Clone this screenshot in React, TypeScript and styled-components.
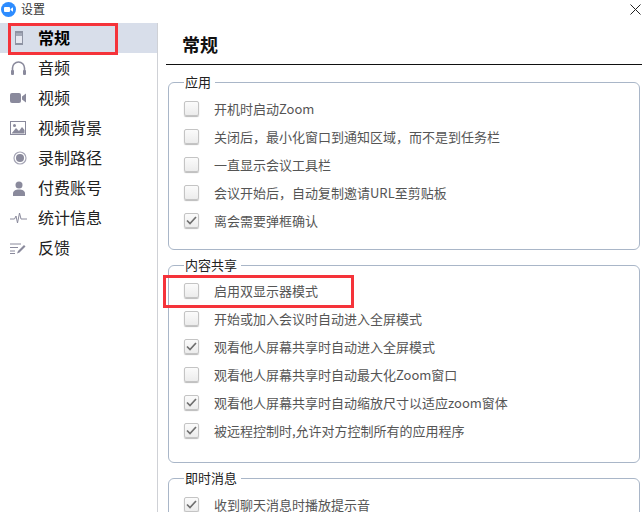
import React from 'react';
import styled, { createGlobalStyle } from 'styled-components';

const Global = createGlobalStyle`
  html, body { margin: 0; padding: 0; background: #fff; overflow: hidden; }
  body { font-family: "Noto Sans CJK SC", "Liberation Sans", sans-serif; }
  * { box-sizing: border-box; }
`;

const Win = styled.div`
  position: relative;
  width: 642px;
  height: 512px;
  overflow: hidden;
  background: #fff;
`;
const TitleBar = styled.div`
  height: 23px;
  display: flex;
  align-items: center;
  padding: 0 0 5px 1px;
  gap: 5px;
  font-size: 12px;
  color: #333;
`;
const TitleText = styled.span`
  line-height: 18px;
`;
const CloseBtn = styled.svg`
  margin-left: auto;
  margin-right: 1px;
  flex: none;
`;
const Body = styled.div`
  display: flex;
  height: 489px;
`;
const Sidebar = styled.nav`
  width: 158px;
  flex: none;
  border-right: 1px solid #cfd1d6;
`;
const NavRow = styled.div<{ $active?: boolean }>`
  height: 30px;
  display: flex;
  align-items: center;
  background: ${p => (p.$active ? '#d8deea' : 'transparent')};
  color: ${p => (p.$active ? '#000' : '#222')};
  font-size: 16px;
  font-weight: ${p => (p.$active ? 700 : 400)};
`;
const NavLabel = styled.span`
  line-height: 26px;
  margin-bottom: 3px;
`;
const NavIcon = styled.span`
  width: 38px;
  padding-left: 10px;
  flex: none;
  display: flex;
  align-items: center;
`;
const Main = styled.main`
  flex: 1;
  min-width: 0;
  padding-left: 8px;
`;
const Heading = styled.h1`
  margin: 0;
  height: 42px;
  padding: 8px 0 0 16px;
  font-size: 18px;
  line-height: 26px;
  font-weight: 700;
  color: #111;
  border-bottom: 1px solid #111;
`;
const Groups = styled.div`
  padding: 8px 2px 0 2px;
  display: flex;
  flex-direction: column;
  gap: 6px;
`;
const Group = styled.fieldset<{ $h: number }>`
  margin: 0;
  padding: 0 0 0 15px;
  min-width: 0;
  height: ${p => p.$h}px;
  border: 1px solid #a9b6c8;
  border-radius: 6px;
  display: block;
`;
const Legend = styled.legend`
  margin-left: 0;
  padding: 0 4px 0 1px;
  font-size: 13px;
  line-height: 18px;
  color: #222;
`;
const Rows = styled.div<{ $top: number }>`
  padding-top: ${p => p.$top}px;
`;
const Row = styled.div`
  height: 28px;
  display: flex;
  align-items: center;
  gap: 15px;
  font-size: 13px;
  color: #555;
  white-space: nowrap;
`;
const Box = styled.span`
  width: 15px;
  height: 15px;
  flex: none;
  border: 1px solid #c4c4c4;
  border-radius: 2px;
  background: linear-gradient(#fbfbfb, #ececec);
  box-shadow: 0 1px 1px #bbb;
  display: flex;
  align-items: center;
  justify-content: center;
`;
const Highlight = styled.div<{ $x: number; $y: number; $w: number; $h: number }>`
  position: absolute;
  left: ${p => p.$x}px;
  top: ${p => p.$y}px;
  width: ${p => p.$w}px;
  height: ${p => p.$h}px;
  border: 3px solid #f5333a;
  pointer-events: none;
`;

const c = '#8a8a9c';
const navIcons: Record<string, React.ReactNode> = {
  general: (
    <svg width="14" height="16" viewBox="0 0 14 16">
      <rect x="5" y="1" width="8" height="14" fill="#8e93a3" />
      <rect x="6" y="3" width="6" height="3" fill="#a4a9b8" />
      <rect x="6" y="6" width="6" height="7" fill="#e6e8f0" />
    </svg>
  ),
  audio: (
    <svg width="17" height="16" viewBox="0 0 17 16">
      <path d="M2.5 11V8a6 6 0 0 1 12 0v3" fill="none" stroke={c} strokeWidth="1.6" />
      <rect x="1" y="10" width="3" height="5" rx="1" fill={c} />
      <rect x="13" y="10" width="3" height="5" rx="1" fill={c} />
    </svg>
  ),
  video: (
    <svg width="17" height="12" viewBox="0 0 17 12">
      <rect x="0" y="1" width="11" height="10" rx="2" fill={c} />
      <path d="M12 4.5 16 1.5v9l-4-3z" fill={c} />
    </svg>
  ),
  bg: (
    <svg width="16" height="14" viewBox="0 0 16 14">
      <rect x=".5" y=".5" width="15" height="13" fill="#fff" stroke={c} />
      <circle cx="4.5" cy="4.5" r="1.5" fill={c} />
      <path d="M1.5 12.5 6 7l3 3 3-4 2.5 3v3.500z" fill={c} />
    </svg>
  ),
  record: (
    <svg width="14" height="14" viewBox="0 0 14 14" style={{ marginLeft: 3 }}>
      <circle cx="7" cy="7" r="6" fill="none" stroke="#a5a5b5" strokeWidth="1.200" />
      <circle cx="7" cy="7" r="4" fill={c} />
    </svg>
  ),
  account: (
    <svg width="14" height="15" viewBox="0 0 14 15" style={{ marginLeft: 2 }}>
      <circle cx="7" cy="4" r="3.500" fill={c} />
      <path d="M1 15v-2.500C1 10 3.500 8.500 7 8.500s6 1.500 6 4V15z" fill={c} />
    </svg>
  ),
  stats: (
    <svg width="17" height="12" viewBox="0 0 17 12">
      <path d="M0 7h4.500l1.500-3 1.500 7 2-10 1.500 6h6" fill="none" stroke={c} strokeWidth="1" />
    </svg>
  ),
  feedback: (
    <svg width="16" height="11" viewBox="0 0 16 11">
      <path d="M0 1h11M0 4.500h8M0 8h5M0 10.500h5" fill="none" stroke={c} strokeWidth="1" />
      <path d="M7 10.500 8 8l6-6 1.500 1.500-6 6z" fill={c} />
    </svg>
  ),
};

const nav = [
  ['general', '常规'],
  ['audio', '音频'],
  ['video', '视频'],
  ['bg', '视频背景'],
  ['record', '录制路径'],
  ['account', '付费账号'],
  ['stats', '统计信息'],
  ['feedback', '反馈'],
];

type Item = [string, boolean];
const groups: { title: string; h: number; top: number; items: Item[] }[] = [
  {
    title: '应用',
    h: 177,
    top: 3,
    items: [
      ['开机时启动Zoom', false],
      ['关闭后，最小化窗口到通知区域，而不是到任务栏', false],
      ['一直显示会议工具栏', false],
      ['会议开始后，自动复制邀请URL至剪贴板', false],
      ['离会需要弹框确认', true],
    ],
  },
  {
    title: '内容共享',
    h: 207,
    top: 2,
    items: [
      ['启用双显示器模式', false],
      ['开始或加入会议时自动进入全屏模式', false],
      ['观看他人屏幕共享时自动进入全屏模式', true],
      ['观看他人屏幕共享时自动最大化Zoom窗口', false],
      ['观看他人屏幕共享时自动缩放尺寸以适应zoom窗体', true],
      ['被远程控制时,允许对方控制所有的应用程序', true],
    ],
  },
  {
    title: '即时消息',
    h: 80,
    top: 3,
    items: [['收到聊天消息时播放提示音', true]],
  },
];

const Check = () => (
  <svg width="11" height="9" viewBox="0 0 11 9">
    <path d="M1 4.500 4 7.500 10 1" fill="none" stroke="#6f6f6f" strokeWidth="1.700" />
  </svg>
);

export default function App() {
  return (
    <Win>
      <Global />
      <TitleBar>
        <svg width="15" height="15" viewBox="0 0 15 15">
          <circle cx="7.500" cy="7.500" r="7.500" fill="#2d8cff" />
          <rect x="3" y="5" width="6" height="5" rx="1" fill="#fff" />
          <path d="M9.500 7 12 5.200v4.600L9.500 8z" fill="#fff" />
        </svg>
        <TitleText>设置</TitleText>
        <CloseBtn width="11" height="11" viewBox="0 0 11 11">
          <path d="M.5.500l10 10M10.500.500l-10 10" stroke="#222" strokeWidth="1" fill="none" />
        </CloseBtn>
      </TitleBar>
      <Body>
        <Sidebar>
          {nav.map(([k, label], i) => (
            <NavRow key={k} $active={i === 0}>
              <NavIcon>{navIcons[k]}</NavIcon>
              <NavLabel>{label}</NavLabel>
            </NavRow>
          ))}
        </Sidebar>
        <Main>
          <Heading>常规</Heading>
          <Groups>
            {groups.map(g => (
              <Group key={g.title} $h={g.h}>
                <Legend>{g.title}</Legend>
                <Rows $top={g.top}>
                  {g.items.map(([t, on]) => (
                    <Row key={t}>
                      <Box>{on && <Check />}</Box>
                      {t}
                    </Row>
                  ))}
                </Rows>
              </Group>
            ))}
          </Groups>
        </Main>
      </Body>
      <Highlight $x={8} $y={23} $w={110} $h={32} />
      <Highlight $x={163} $y={275} $w={191} $h={33} />
    </Win>
  );
}
